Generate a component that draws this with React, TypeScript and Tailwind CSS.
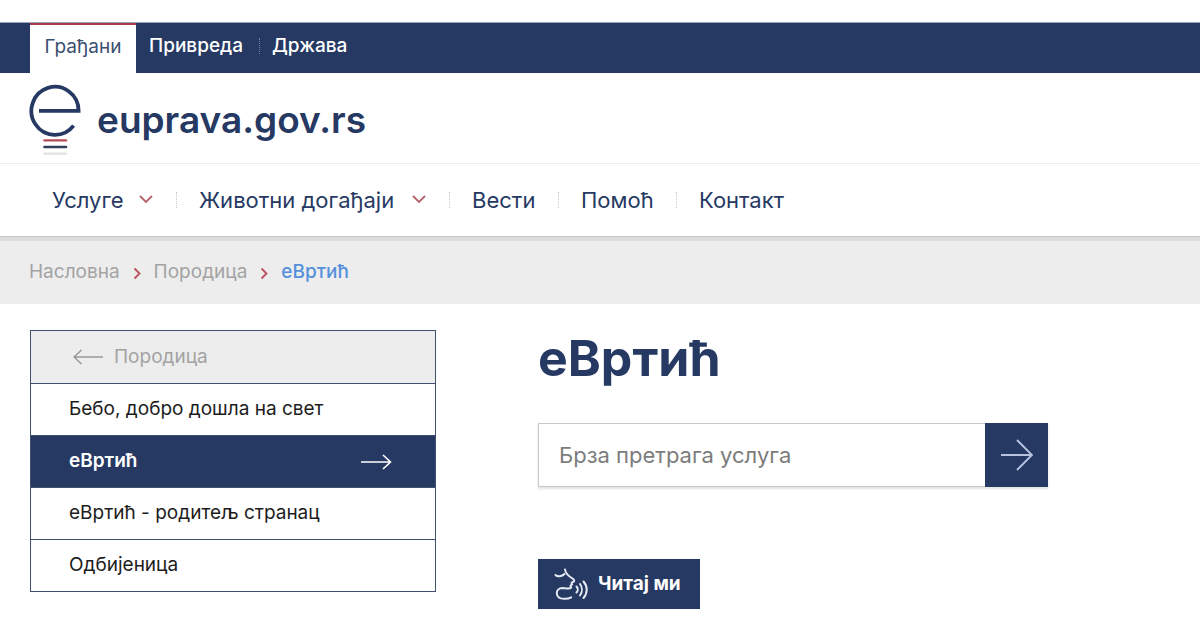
const TABS = ['Привреда', 'Држава'];

const NAV = [
  { label: 'Услуге', menu: true, width: 'w-[70px]' },
  { label: 'Животни догађаји', menu: true, width: 'w-[196px]' },
  { label: 'Вести', menu: false, width: 'w-[64px]' },
  { label: 'Помоћ', menu: false, width: 'w-[73px]' },
  { label: 'Контакт', menu: false, width: 'w-[84px]' },
];

const SIDE_LINKS = [
  { label: 'Бебо, добро дошла на свет', active: false },
  { label: 'еВртић', active: true },
  { label: 'еВртић - родитељ странац', active: false },
  { label: 'Одбијеница', active: false },
];

function Logo() {
  return (
    <svg className="w-[52px] h-[72px] shrink-0" viewBox="29 84 52 72" fill="none" aria-hidden="true">
      <path d="M39 110.8H78.6A23.6 24 0 1 0 73.6 125.6" stroke="#263963" strokeWidth="3.8" strokeLinejoin="miter" />
      <path d="M44.5 140.4H66" stroke="#b34a55" strokeWidth="2.4" strokeLinecap="round" />
      <path d="M44.5 147H66" stroke="#2f4058" strokeWidth="2.6" strokeLinecap="round" />
      <path d="M44.5 153.6H66" stroke="#e2e2e2" strokeWidth="2.4" strokeLinecap="round" />
    </svg>
  );
}

function ChevronDown() {
  return (
    <svg className="w-4 h-4 shrink-0" viewBox="0 0 16 16" fill="none" aria-hidden="true">
      <path d="M2 4L8 10L14 4" stroke="#b5616c" strokeWidth="1.8" />
    </svg>
  );
}

function ChevronRight() {
  return (
    <svg className="w-3 h-4 shrink-0" viewBox="0 0 12 16" fill="none" aria-hidden="true">
      <path d="M3.5 3.5L8.5 8.5L3.5 13.5" stroke="#bd5560" strokeWidth="1.9" />
    </svg>
  );
}

function SpeakIcon() {
  return (
    <svg className="w-9 h-9 shrink-0" viewBox="0 0 36 36" fill="none" stroke="#e6eaf5" strokeWidth="2" strokeLinecap="round" strokeLinejoin="round" aria-hidden="true">
      <path d="M1.5 9C3.5 11 8 10.5 10.5 8" />
      <path d="M11 3.5C11.5 7.5 14.5 10 18.5 12.500C20.500 14 20.800 15 19.300 15.800L17.500 16.700L18.200 18.300L16.500 19.800L17.200 21.500C15.500 23.500 12.500 22.300 8.500 22C4.800 22 2.500 24.500 2.800 27.500C3.200 31.500 7 33 11 32.800C13.500 32.700 15.500 32.200 17.200 31.300" />
      <path d="M22.500 20.500C24.200 22.200 24.200 24.800 22.500 26.500" />
      <path d="M26 18C28.500 21.200 28.500 26 26 29.500" />
      <path d="M29.500 15.500C33.800 20.500 33.800 27 29.500 32" />
    </svg>
  );
}

export default function App() {
  return (
    <div className="min-h-screen bg-white pt-[22px] font-['Inter','Noto_Sans',sans-serif] text-[#263963]">
      <header>
        <nav className="flex h-[51px] items-stretch border-t border-[#9ba5bb] bg-[#263963] px-[30px] text-[19px] font-medium text-white" aria-label="Портали">
          <a href="#" className="flex w-[106px] items-center justify-center border-t-2 border-[#a63b49] bg-white pb-1 font-normal text-[#3c4f70]">
            Грађани
          </a>
          {TABS.map((tab, i) => (
            <div key={tab} className="flex items-center pb-1">
              {i > 0 && <span className="h-4 border-l border-dotted border-[#6f7fa3]" />}
              <a href="#" className={i === 0 ? 'w-[123px] pl-[13px]' : 'pl-3'}>{tab}</a>
            </div>
          ))}
        </nav>

        <div className="flex h-[91px] items-center gap-4 border-b border-[#ececec] px-[29px] pt-1">
          <Logo />
          <a href="#" className="text-[37px] leading-10 font-semibold">euprava.gov.rs</a>
        </div>

        <nav className="flex h-[73px] items-center border-b border-[#c6c6c6] px-[30px] text-[22px]" aria-label="Главни мени">
          {NAV.map((item, i) => (
            <div key={item.label} className="flex items-center">
              {i > 0 && <span className="h-4 border-l border-dotted border-[#c9c9c9]" />}
              <a href="#" className="flex items-center gap-4 whitespace-nowrap px-[22px]">
                <span className={item.width}>{item.label}</span>
                {item.menu && <ChevronDown />}
              </a>
            </div>
          ))}
        </nav>
      </header>

      <nav className="flex h-[67px] items-center gap-[11px] border-t-4 border-[#dcdcdc] bg-[#ededed] px-[29px] text-[19px] text-[#a3a3a3]" aria-label="Путања">
        <a href="#">Насловна</a>
        <ChevronRight />
        <a href="#">Породица</a>
        <ChevronRight />
        <a href="#" className="font-medium text-[#5590dc]" aria-current="page">еВртић</a>
      </nav>

      <div className="grid gap-8 px-[30px] pt-[26px] lg:grid-cols-[406px_minmax(0,510px)] lg:gap-[102px]">
        <aside>
          <ul className="divide-y divide-[#40506f] border border-[#40506f] text-[19px]">
            <li>
              <a href="#" className="flex h-[52px] items-center gap-[11px] bg-[#ededed] pl-[42px] text-[#a3a3a3]">
                <svg className="h-4 w-[30px]" viewBox="0 0 30 16" fill="none" stroke="#999" strokeWidth="1.5" aria-hidden="true">
                  <path d="M30 8H1M8.500 1L1 8L8.500 15" />
                </svg>
                Породица
              </a>
            </li>
            {SIDE_LINKS.map((link) => (
              <li key={link.label}>
                <a
                  href="#"
                  className={`flex h-[51px] items-center justify-between pl-[38px] pr-[43px] ${
                    link.active ? 'bg-[#263963] font-semibold text-white' : 'text-[#1c1c1c]'
                  }`}
                >
                  {link.label}
                  {link.active && (
                    <svg className="h-4 w-[31px]" viewBox="0 0 31 16" fill="none" stroke="white" strokeWidth="1.6" aria-hidden="true">
                      <path d="M0 8H29.500M22 1L29.500 8L22 15" />
                    </svg>
                  )}
                </a>
              </li>
            ))}
          </ul>
        </aside>

        <main>
          <h1 className="pt-1 text-[50px] leading-[48px] font-bold">еВртић</h1>

          <form className="mt-[41px] flex h-16 shadow-[0_2px_2px_#e4e4e4]" onSubmit={(e) => e.preventDefault()}>
            <input
              type="text"
              aria-label="Брза претрага услуга"
              placeholder="Брза претрага услуга"
              className="min-w-0 flex-1 border border-r-0 border-[#c8c8c8] px-5 text-[22px] outline-none placeholder:text-[#7c7c7c]"
            />
            <button type="submit" aria-label="Претражи" className="flex w-[63px] items-center justify-center bg-[#263963]">
              <svg className="h-8 w-8" viewBox="0 0 32 32" fill="none" stroke="#b9c3df" strokeWidth="1.9" aria-hidden="true">
                <path d="M0 16H31M16 1L31 16L16 31" />
              </svg>
            </button>
          </form>

          <button type="button" className="mt-[72px] flex h-[50px] w-[162px] items-center gap-2 bg-[#263963] pl-4 text-[19px] font-bold text-white">
            <SpeakIcon />
            Читај ми
          </button>
        </main>
      </div>
    </div>
  );
}
